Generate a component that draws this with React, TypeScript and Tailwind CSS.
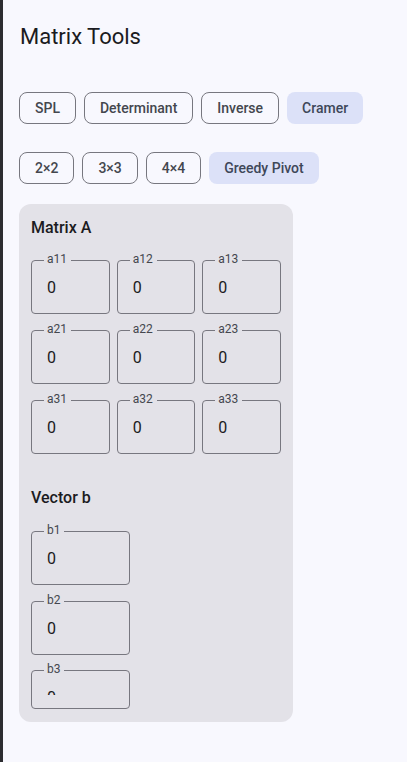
import { FC } from "react";

type FieldProps = {
  label: string;
  value?: string;
  short?: boolean;
  className?: string;
};

// outlined text field, label sits in a notch on the top border
const Field: FC<FieldProps> = ({ label, value = "0", short, className = "" }) => {
  return (
    <div
      className={`relative rounded-[4px] border border-[#77777f] ${
        short ? "h-[39px]" : "h-[54px]"
      } ${className}`}
    >
      <span className="absolute -top-[10px] left-[12px] bg-[#e3e2e8] pl-[3px] pr-[4px] text-xs leading-4 text-[#44474e]">
        {label}
      </span>
      <div
        className={`mx-[15px] mt-[15px] overflow-hidden text-base leading-6 text-[#1b1b21] ${
          short ? "h-[9px]" : "h-6"
        }`}
      >
        {value}
      </div>
    </div>
  );
};

const Chip: FC<{ label: string; selected?: boolean }> = ({ label, selected }) => {
  return (
    <button
      className={`h-8 rounded-lg px-[15px] text-sm font-medium leading-5 ${
        selected
          ? "bg-[#dce1f8] text-[#3e4759]"
          : "border border-[#77777f] text-[#44474e]"
      }`}
    >
      {label}
    </button>
  );
};

const methods = ["SPL", "Determinant", "Inverse", "Cramer"];
const sizes = ["2×2", "3×3", "4×4", "Greedy Pivot"];
const cells = ["a11", "a12", "a13", "a21", "a22", "a23", "a31", "a32", "a33"];

export default function App() {
  return (
    <div className="flex h-[762px] w-[407px] overflow-hidden bg-[#f8f8fe] font-['Roboto',sans-serif]">
      <div className="w-[3px] shrink-0 bg-[#2c2c30]" />
      <main className="flex-1 px-4 pt-[23px]">
        <h1 className="pl-[1px] text-[22px] leading-7 text-[#1b1b21]">Matrix Tools</h1>

        <div className="mt-[41px] flex gap-2">
          {methods.map((m) => (
            <Chip key={m} label={m} selected={m === "Cramer"} />
          ))}
        </div>

        <div className="mt-[28px] flex gap-2">
          {sizes.map((s) => (
            <Chip key={s} label={s} selected={s === "Greedy Pivot"} />
          ))}
        </div>

        <section className="mt-[20px] h-[518px] w-[274px] overflow-hidden rounded-xl bg-[#e3e2e8] px-3 pt-3">
          <h2 className="text-base font-medium leading-6 text-[#1b1b21]">Matrix A</h2>
          <div className="mt-5 grid grid-cols-3 gap-x-[7px] gap-y-4">
            {cells.map((c) => (
              <Field key={c} label={c} />
            ))}
          </div>

          <h2 className="mt-8 text-base font-medium leading-6 text-[#1b1b21]">Vector b</h2>
          <div className="mt-[21px] flex flex-col">
            <Field label="b1" className="w-[99px]" />
            <Field label="b2" className="mt-4 w-[99px]" />
            <Field label="b3" short className="mt-[15px] w-[99px]" />
          </div>
        </section>
      </main>
    </div>
  );
}
